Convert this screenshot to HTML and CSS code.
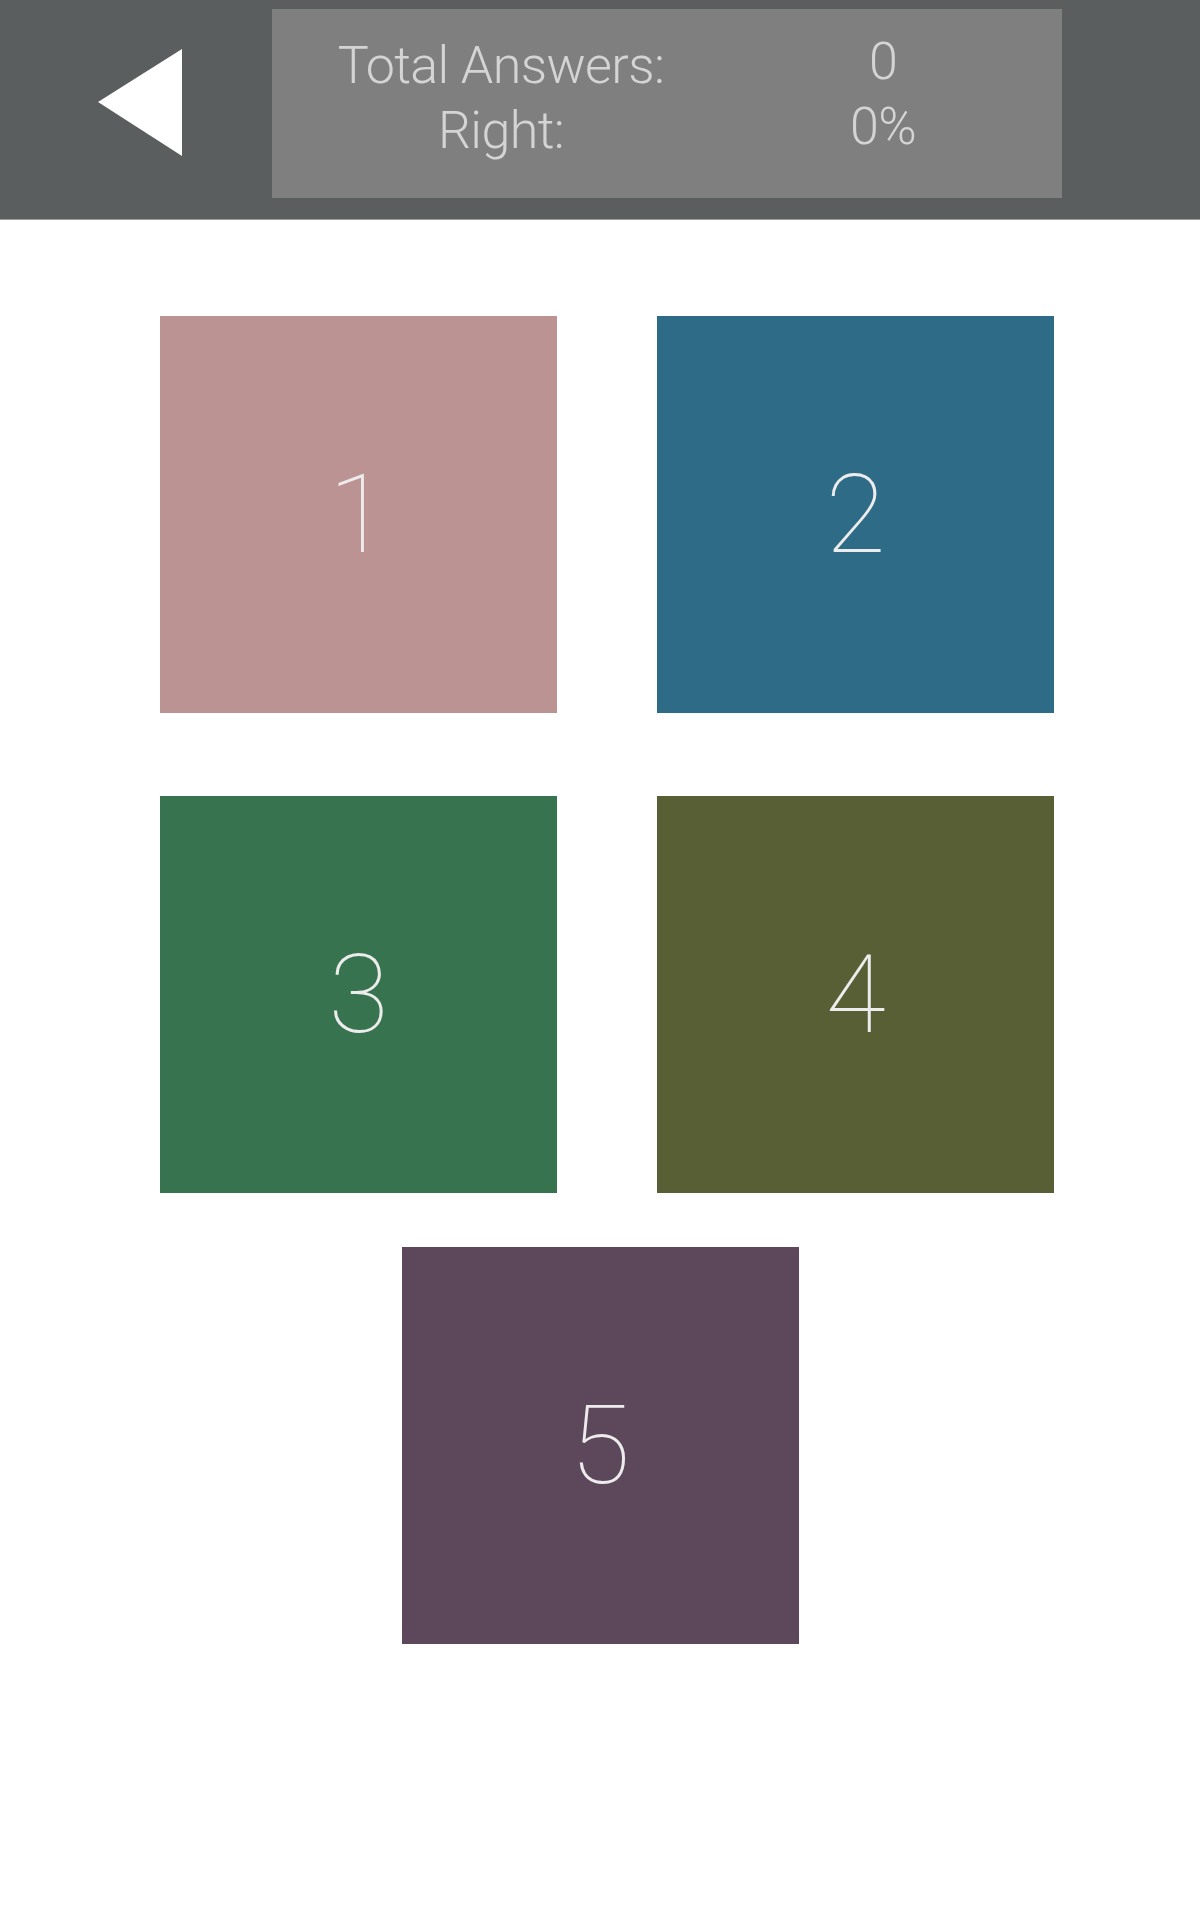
FILE: index.html
```html
<!DOCTYPE html>
<html>
<head>
<meta charset="utf-8">
<link rel="stylesheet" href="styles.css">
</head>
<body>
<header class="topbar">
  <button class="back" aria-label="Back">
    <svg width="84" height="107" viewBox="0 0 84 107"><polygon points="0,53 84,0 84,107" fill="#ffffff"/></svg>
  </button>
  <div class="stats">
    <div class="label">Total Answers:</div>
    <div class="value">0</div>
    <div class="label">Right:</div>
    <div class="value">0%</div>
  </div>
</header>
<main class="board">
  <div class="grid">
    <div class="tile tile-1">1</div>
    <div class="tile tile-2">2</div>
    <div class="tile tile-3">3</div>
    <div class="tile tile-4">4</div>
  </div>
  <div class="last-row">
    <div class="tile tile-5">5</div>
  </div>
</main>
</body>
</html>
```
FILE: styles.css
```css
* { box-sizing: border-box; }
html, body { margin: 0; padding: 0; background: #ffffff; }
body { font-family: Roboto, "Liberation Sans", sans-serif; width: 1200px; }

.topbar {
  height: 220px;
  background: #5a5e5f;
  border-bottom: 1px solid #9a9c9c;
  display: flex;
  align-items: flex-start;
}
.back {
  border: 0;
  background: transparent;
  padding: 0;
  margin: 49px 0 0 98px;
  width: 84px;
  height: 107px;
  display: block;
}
.back svg { display: block; }

.stats {
  margin: 9px 0 0 90px;
  width: 790px;
  height: 189px;
  background: #7f7f7f;
  padding-top: 24px;
  display: grid;
  grid-template-columns: 458px 306px;
  grid-auto-rows: 65px;
  font-size: 52px;
  line-height: 65px;
  font-weight: 300;
  color: #d4d4d4;
  letter-spacing: -0.6px;
}
.label { text-align: center; }
.value { text-align: center; position: relative; top: -4px; }

.board { padding-top: 96px; }
.grid {
  margin-left: 160px;
  display: grid;
  grid-template-columns: 397px 397px;
  grid-auto-rows: 397px;
  column-gap: 100px;
  row-gap: 83px;
}
.last-row {
  margin-top: 54px;
  display: flex;
  justify-content: center;
}
.tile {
  width: 397px;
  height: 397px;
  display: flex;
  align-items: center;
  justify-content: center;
  font-size: 110px;
  font-weight: 100;
  color: #ececec;
  line-height: 1;
}
.tile-1 { background: #bb9392; }
.tile-2 { background: #2d6b86; }
.tile-3 { background: #38734f; }
.tile-4 { background: #595f35; }
.tile-5 { background: #5d475a; }
```
